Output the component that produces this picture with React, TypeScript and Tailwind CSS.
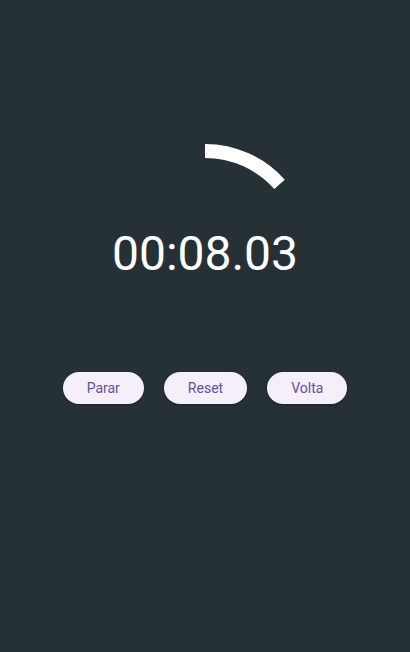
const buttons = ['Parar', 'Reset', 'Volta'];

export default function App() {
  const elapsed = 8.03;
  const angle = ((elapsed % 60) / 60) * 2 * Math.PI;
  const endX = 107 + 100 * Math.sin(angle);
  const endY = 107 - 100 * Math.cos(angle);

  return (
    <div
      className="flex h-[652px] w-full flex-col items-center bg-[#263136] pt-[144px]"
      style={{ fontFamily: 'Roboto, "Noto Sans", sans-serif' }}
    >
      {/* Dial */}
      <div className="relative h-[214px] w-[214px]">
        <svg width="214" height="214" viewBox="0 0 214 214" className="absolute inset-0">
          <path
            d={`M107 7 A100 100 0 0 1 ${endX.toFixed(2)} ${endY.toFixed(2)}`}
            fill="none"
            stroke="#ffffff"
            strokeWidth="14"
          />
        </svg>
        <div className="absolute inset-0 flex items-center justify-center pt-[5px]">
          <span className="text-[48px] leading-none text-white">00:08.03</span>
        </div>
      </div>

      {/* Controls */}
      <div className="mt-[14px] flex gap-5">
        {buttons.map((b) => (
          <button
            key={b}
            className="h-8 rounded-full bg-[#f4eff8] px-6 text-sm text-[#6750a4] shadow-[0_1px_2px_rgba(0,0,0,0.3)]"
          >
            {b}
          </button>
        ))}
      </div>
    </div>
  );
}
